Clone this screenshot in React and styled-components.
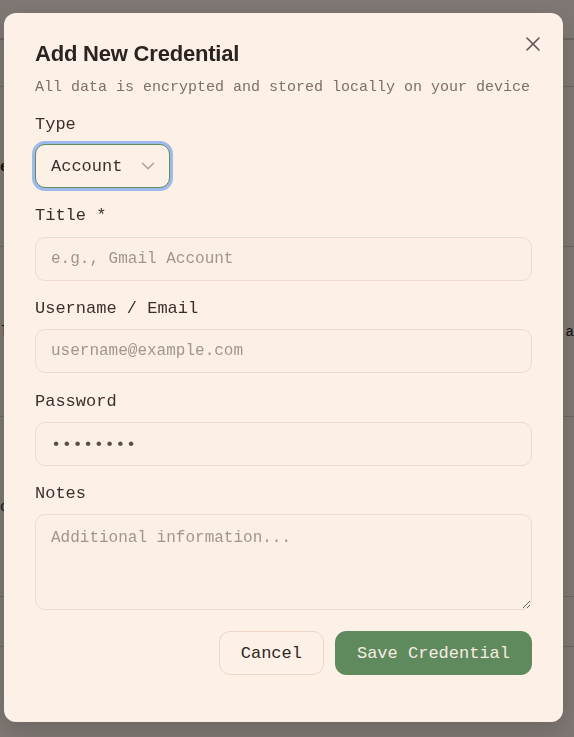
import styled, { createGlobalStyle } from "styled-components";
import { X, ChevronDown } from "lucide-react";

const GlobalStyle = createGlobalStyle`
  html, body {
    margin: 0;
    padding: 0;
    background: #fcefe6;
    overflow: hidden;
  }
  * {
    box-sizing: border-box;
  }
`;

const mono = `"Liberation Mono", "Courier New", monospace`;

/* page behind the modal */
const Page = styled.div`
  width: 574px;
  height: 737px;
  display: flex;
  flex-direction: column;
  font-family: ${mono};
  color: #2a2420;
`;

const PageHeader = styled.div`
  height: 40px;
  border-bottom: 2px solid #d8c8bb;
`;

const PageRow = styled.div`
  height: ${(p) => p.$h}px;
  border-bottom: 1px solid #dccbbd;
  display: flex;
  align-items: center;
  justify-content: space-between;
  font-size: 14px;
  font-weight: ${(p) => (p.$bold ? 700 : 400)};
`;

const Overlay = styled.div`
  position: fixed;
  inset: 0;
  background: rgba(0, 0, 0, 0.5);
  padding: 13px 0 0 4px;
`;

const Dialog = styled.div`
  width: 559px;
  height: 709px;
  background: #fdf0e7;
  border-radius: 12px;
  padding: 28px 31px 0 31px;
  display: flex;
  flex-direction: column;
  position: relative;
  box-shadow: 0 8px 24px rgba(0, 0, 0, 0.15);
`;

const CloseButton = styled.button`
  position: absolute;
  top: 19px;
  right: 18px;
  width: 24px;
  height: 24px;
  padding: 0;
  border: none;
  background: transparent;
  color: #5f5550;
  display: flex;
  align-items: center;
  justify-content: center;
  cursor: pointer;
`;

const Title = styled.h2`
  margin: 0;
  font-family: "Liberation Sans", Arial, sans-serif;
  font-weight: 700;
  font-size: 22px;
  line-height: 26px;
  letter-spacing: -0.2px;
  color: #2a2420;
`;

const Subtitle = styled.p`
  margin: 11px 0 0 0;
  font-family: ${mono};
  font-size: 15px;
  line-height: 20px;
  color: #7b716b;
`;

const Form = styled.div`
  margin-top: 17px;
  display: flex;
  flex-direction: column;
  gap: 18px;
`;

const Field = styled.div`
  display: flex;
  flex-direction: column;
  gap: ${(p) => p.$gap || 10}px;
  margin-top: ${(p) => p.$shift || 0}px;
`;

const Label = styled.label`
  font-family: ${mono};
  font-size: 17px;
  line-height: 20px;
  color: #3a302b;
`;

const SelectBox = styled.div`
  width: 135px;
  height: 44px;
  border: 1px solid #5f8b5f;
  border-radius: 10px;
  box-shadow: 0 0 0 3px #9dbbea;
  background: #fdf0e7;
  display: flex;
  align-items: center;
  gap: 15px;
  padding: 0 0 0 15px;
  font-family: ${mono};
  font-size: 17px;
  color: #3a302b;
  svg {
    color: #a89d95;
  }
`;

const inputBase = `
  width: 497px;
  border: 1px solid #f0dacb;
  border-radius: 10px;
  background: #fcefe6;
  font-family: ${mono};
  color: #5a4f49;
  outline: none;
  &::placeholder {
    color: #a0968f;
  }
`;

const Input = styled.input`
  ${inputBase}
  height: 44px;
  padding: 0 15px;
  font-size: ${(p) => p.$size || 16}px;
  letter-spacing: ${(p) => (p.$secret ? "0.5px" : "0")};
`;

const TextArea = styled.textarea`
  ${inputBase}
  height: 96px;
  padding: 12px 15px;
  font-size: 16px;
  line-height: 22px;
  resize: vertical;
`;

const Actions = styled.div`
  margin-top: 21px;
  display: flex;
  justify-content: flex-end;
  gap: 11px;
`;

const Button = styled.button`
  height: 44px;
  padding: 0 21px;
  border-radius: 11px;
  font-family: ${mono};
  font-size: 17px;
  cursor: pointer;
  border: 1px solid ${(p) => (p.$primary ? "#5e8a5e" : "#ecd5c5")};
  background: ${(p) => (p.$primary ? "#5e8a5e" : "#fdf0e7")};
  color: ${(p) => (p.$primary ? "#f8ece2" : "#2f2723")};
`;

export default function App() {
  return (
    <>
      <GlobalStyle />
      <Page>
        <PageHeader />
        <PageRow $h={47} />
        <PageRow $h={160} $bold>
          <span>e</span>
        </PageRow>
        <PageRow $h={170}>
          <span>l</span>
          <span>a</span>
        </PageRow>
        <PageRow $h={180}>
          <span>c</span>
        </PageRow>
        <PageRow $h={50} />
      </Page>
      <Overlay>
        <Dialog role="dialog" aria-labelledby="dlg-title">
          <CloseButton aria-label="Close">
            <X size={24} strokeWidth={1.6} />
          </CloseButton>
          <Title id="dlg-title">Add New Credential</Title>
          <Subtitle>All data is encrypted and stored locally on your device</Subtitle>
          <Form>
            <Field $gap={9}>
              <Label>Type</Label>
              <SelectBox>
                <span>Account</span>
                <ChevronDown size={22} strokeWidth={1.4} />
              </SelectBox>
            </Field>
            <Field $gap={11}>
              <Label>Title *</Label>
              <Input placeholder="e.g., Gmail Account" />
            </Field>
            <Field>
              <Label>Username / Email</Label>
              <Input placeholder="username@example.com" />
            </Field>
            <Field $shift={1}>
              <Label>Password</Label>
              <Input type="password" defaultValue="password" $size={17} $secret />
            </Field>
            <Field>
              <Label>Notes</Label>
              <TextArea placeholder="Additional information..." />
            </Field>
          </Form>
          <Actions>
            <Button>Cancel</Button>
            <Button $primary>Save Credential</Button>
          </Actions>
        </Dialog>
      </Overlay>
    </>
  );
}
